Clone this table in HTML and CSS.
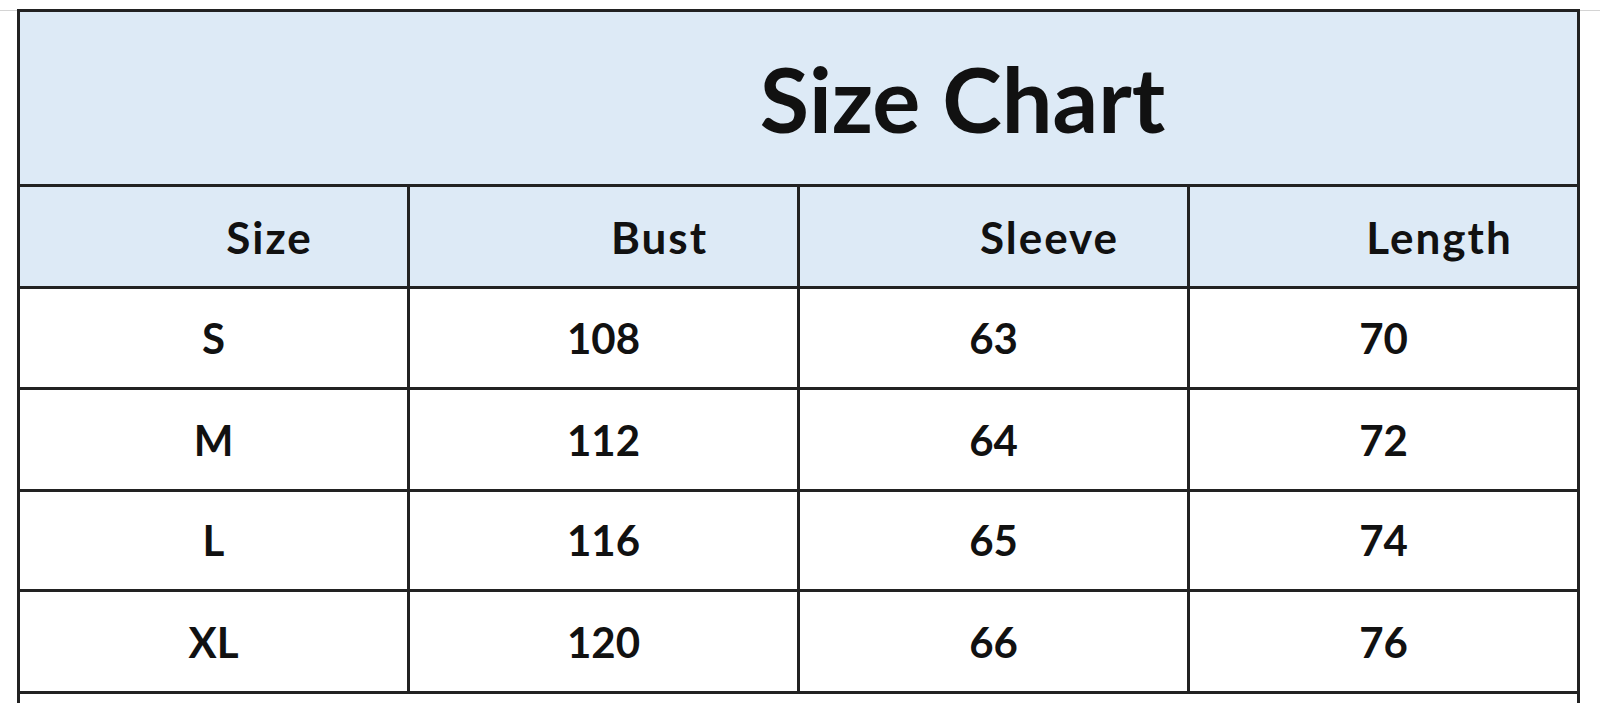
FILE: index.html
```html
<!DOCTYPE html>
<html lang="en">
<head>
<meta charset="utf-8">
<title>Size Chart</title>
<link rel="stylesheet" href="styles.css">
</head>
<body>
<div class="page">
  <div class="chart">
    <div class="title">Size Chart</div>
    <div class="cell head">Size</div>
    <div class="cell head">Bust</div>
    <div class="cell head">Sleeve</div>
    <div class="cell head">Length</div>

    <div class="cell">S</div>
    <div class="cell">108</div>
    <div class="cell">63</div>
    <div class="cell">70</div>

    <div class="cell tall">M</div>
    <div class="cell tall">112</div>
    <div class="cell tall">64</div>
    <div class="cell tall">72</div>

    <div class="cell">L</div>
    <div class="cell">116</div>
    <div class="cell">65</div>
    <div class="cell">74</div>

    <div class="cell tall">XL</div>
    <div class="cell tall">120</div>
    <div class="cell tall">66</div>
    <div class="cell tall">76</div>

    <div class="cell note"></div>
  </div>
</div>
</body>
</html>
```
FILE: styles.css
```css
html, body {
  margin: 0;
  padding: 0;
  overflow: hidden;
  background: #ffffff;
}

body {
  font-family: Lato, "Open Sans", Arial, sans-serif;
  color: #111111;
  background-image: linear-gradient(#d4d4d4, #d4d4d4);
  background-repeat: no-repeat;
  background-size: 100% 1px;
  background-position: 0 10px;
}

.page {
  padding: 9px 0 0 17px;
}

.chart {
  display: grid;
  grid-template-columns: repeat(4, 390px);
  grid-template-rows: 175px 102px;
  grid-auto-rows: 101px;
  width: max-content;
  border-top: 3px solid #222222;
  border-left: 3px solid #222222;
  background: #ffffff;
}

.title {
  grid-column: 1 / -1;
  box-sizing: border-box;
  border-right: 3px solid #222222;
  border-bottom: 3px solid #222222;
  background: #ddeaf6;
  display: flex;
  align-items: center;
  justify-content: center;
  padding-left: 328px;
  font-size: 90px;
  font-weight: 700;
  line-height: 1;
}

.cell {
  box-sizing: border-box;
  border-right: 3px solid #222222;
  border-bottom: 3px solid #222222;
  display: flex;
  align-items: center;
  justify-content: center;
  font-size: 42px;
  font-weight: 700;
  line-height: 1;
}

.cell.tall {
  height: 102px;
}

.cell.note {
  grid-column: 1 / -1;
}

.cell.head {
  background: #ddeaf6;
  padding-left: 112px;
  font-size: 44px;
  letter-spacing: 2px;
}
```
